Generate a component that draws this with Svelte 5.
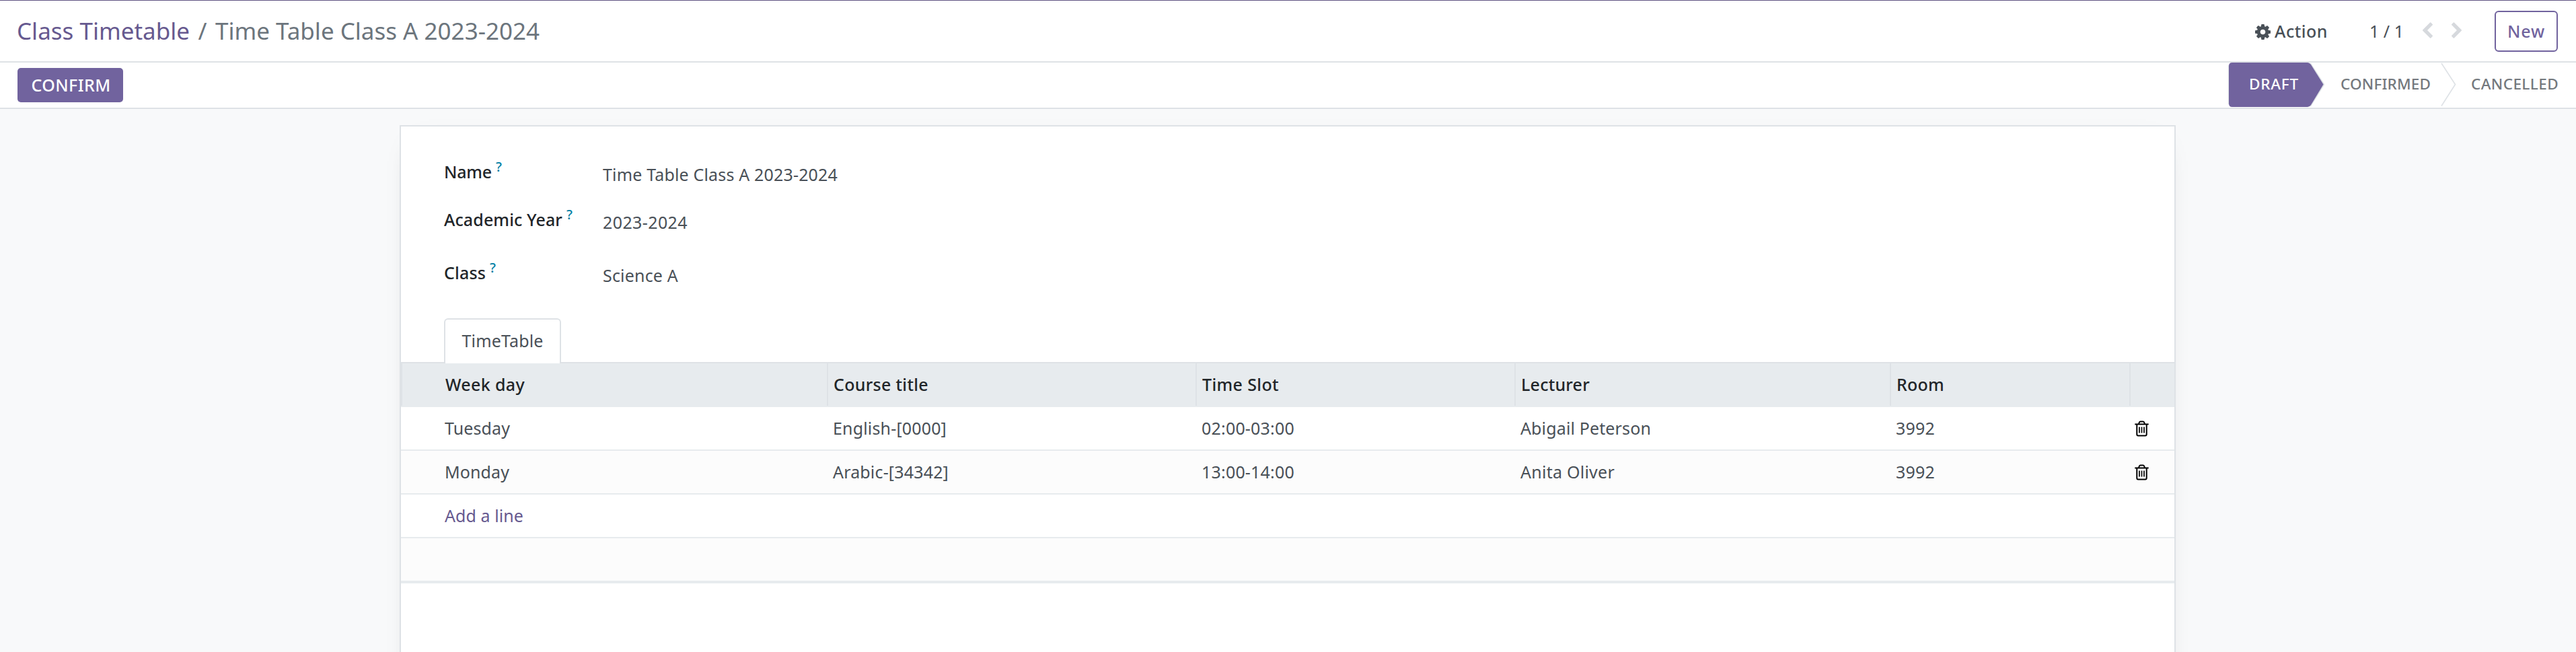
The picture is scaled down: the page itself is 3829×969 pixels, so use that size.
<script>
  const fields = [
    { label: 'Name', lw: 71, value: 'Time Table Class A 2023-2024', vw: 349, h: 71 },
    { label: 'Academic Year', lw: 176, value: '2023-2024', vw: 126, h: 79 },
    { label: 'Class', lw: 62, value: 'Science A', vw: 112, h: 88 }
  ];
  const heads = [['Week day', 118], ['Course title', 141], ['Time Slot', 114], ['Lecturer', 102], ['Room', 71]];
  const rows = [
    [['Tuesday', 97], ['English-[0000]', 169], ['02:00-03:00', 138], ['Abigail Peterson', 194], ['3992', 58]],
    [['Monday', 96], ['Arabic-[34342]', 172], ['13:00-14:00', 138], ['Anita Oliver', 140], ['3992', 58]]
  ];

  // Tracks the letters so the text takes up the given width.
  function fit(node, width) {
    const natural = node.getBoundingClientRect().width;
    node.style.letterSpacing = (width - natural) / node.textContent.length + 'px';
  }
</script>

{#snippet t(text, width)}<span class="t" use:fit={width}>{text}</span>{/snippet}

<div class="page">
  <header class="top">
    <div class="crumbs">
      <a href="#list">{@render t('Class Timetable', 257)}</a>
      <span class="slash">/</span>
      <span>{@render t('Time Table Class A 2023-2024', 482)}</span>
    </div>
    <div class="tools">
      <button class="action">
        <svg width="23" height="23" viewBox="128 128 1536 1536"><path fill="currentColor" d="M1152 896q0-106-75-181t-181-75-181 75-75 181 75 181 181 75 181-75 75-181zm512-109v222q0 12-8 23t-20 13l-185 28q-19 54-39 91 35 50 107 138 10 12 10 25t-9 23q-27 37-99 108t-94 71q-12 0-26-9l-138-108q-44 23-91 38-16 136-29 186-7 28-36 28h-222q-14 0-24.5-8.5t-11.5-21.5l-28-184q-49-16-90-37l-141 107q-10 9-25 9-14 0-25-11-126-114-165-168-7-10-7-23 0-12 8-23 15-21 51-66.5t54-70.5q-27-50-41-99l-183-27q-13-2-21-12.5t-8-23.5v-222q0-12 8-23t19-13l186-28q14-46 39-92-40-57-107-138-10-12-10-24 0-10 9-23 26-36 98.5-107.5t94.5-71.5q13 0 26 10l138 107q44-23 91-38 16-136 29-186 7-28 36-28h222q14 0 24.5 8.5t11.5 21.5l28 184q49 16 90 37l142-107q9-9 24-9 13 0 25 10 129 119 165 170 7 8 7 22 0 12-8 23-15 21-51 66.5t-54 70.5q26 50 41 98l183 28q13 2 21 12.5t8 23.5z"/></svg>
        {@render t('Action', 79)}
      </button>
      <span class="pager">{@render t('1 / 1', 51)}</span>
      <svg class="chev prev" width="15" height="24" viewBox="410 26 1036 1612"><path d="M1427 301l-531 531 531 531q19 19 19 45t-19 45l-166 166q-19 19-45 19t-45-19l-742-742q-19-19-19-45t19-45l742-742q19-19 45-19t45 19l166 166q19 19 19 45t-19 45z"/></svg>
      <svg class="chev next" width="15" height="24" viewBox="346 26 1036 1612"><path d="M1363 877l-742 742q-19 19-45 19t-45-19l-166-166q-19-19-19-45t19-45l531-531-531-531q-19-19-19-45t19-45l166-166q19-19 45-19t45 19l742 742q19 19 19 45t-19 45z"/></svg>
      <button class="new">{@render t('New', 56)}</button>
    </div>
  </header>

  <div class="status">
    <button class="confirm">{@render t('CONFIRM', 118)}</button>
    <div class="steps">
      <div class="step draft">
        <svg width="143" height="66" viewBox="0 0 143 66">
          <path d="M122 1L142.300 32.500L122 65" fill="none" stroke="#dee2e6" stroke-width="2"/>
          <path d="M6 0H118Q121 0 123 3L141.500 32.500L123 63Q121 66 118 66H6Q1 66 1 61V5Q1 0 6 0Z" fill="#71639e"/>
          <path d="M0.500 4V62" stroke="#dee2e6"/>
        </svg>
        <span class="over">{@render t('DRAFT', 74)}</span>
      </div>
      <div class="step confirmed">{@render t('CONFIRMED', 134)}</div>
      <svg class="sep" width="23" height="66" viewBox="0 0 23 66"><path d="M1 1L21.500 32.500L1 64.500" fill="none" stroke="#dee2e6" stroke-width="1.600"/></svg>
      <div class="step cancelled">{@render t('CANCELLED', 130)}</div>
    </div>
  </div>

  <main>
    <section class="sheet">
      <div class="fields">
        {#each fields as f}
          <div class="field" style="height:{f.h}px">
            <div class="label">{@render t(f.label, f.lw)}<sup>?</sup></div>
            <div class="value">{@render t(f.value, f.vw)}</div>
          </div>
        {/each}
      </div>
      <div class="tabs"><div class="tab">{@render t('TimeTable', 121)}</div></div>
      <div class="table">
        <div class="row head">
          {#each heads as [text, w]}<div class="cell">{@render t(text, w)}</div>{/each}
          <div class="cell"></div>
        </div>
        {#each rows as row, i}
          <div class="row" class:alt={i % 2 === 1}>
            {#each row as [text, w]}<div class="cell">{@render t(text, w)}</div>{/each}
            <div class="cell bin">
              <svg width="21" height="24" viewBox="0 0 21 24" fill="none" stroke="#000">
                <path stroke-width="2" d="M0.300 5.500H20.700M6 5L7 2.500Q7.400 1.500 8.500 1.500H12.500Q13.600 1.500 14 2.500L15 5M3.300 5.500V20.500Q3.300 22.500 5.200 22.500H15.800Q17.700 22.500 17.700 20.500V5.500"/>
                <path stroke-width="1.700" d="M7 9.500V18.500M10.500 9.500V18.500M14 9.500V18.500"/>
              </svg>
            </div>
          </div>
        {/each}
        <div class="row"><div class="cell"><a href="#add">{@render t('Add a line', 117)}</a></div></div>
        <div class="row alt last"></div>
      </div>
    </section>
  </main>
</div>

<style>
  :global(body) { margin: 0; overflow: hidden; }
  .page {
    width: 3829px; height: 969px; overflow: hidden; box-sizing: border-box;
    display: flex; flex-direction: column;
    font: 25px/40px "Noto Sans", "Open Sans", sans-serif; color: #495057; background: #f8f9fa;
  }
  .page * { box-sizing: border-box; }
  .t { display: inline-block; white-space: pre; }
  a { color: #66598f; text-decoration: none; }
  button { font: inherit; font-weight: 500; margin: 0; padding: 0; border: 0; background: none; display: flex; align-items: center; }
  svg { display: block; flex: none; }

  .top {
    height: 93px; flex: none; background: #fff; border-top: 1px solid #5f5381; border-bottom: 2px solid #dee2e6;
    display: flex; justify-content: space-between; align-items: center; padding: 0 27px 0 25px;
  }
  .crumbs { display: flex; font-size: 35px; line-height: 48px; color: #6c757d; }
  .slash { width: 38px; text-align: center; }
  .tools { display: flex; align-items: center; color: #495057; }
  .action { color: #495057; gap: 6px; }
  .action svg { margin-top: 2px; }
  .pager { margin-left: 62px; }
  .chev { fill: #d6d9dd; margin-top: -3px; }
  .prev { margin-left: 28px; }
  .next { margin-left: 28px; }
  .new { width: 94px; height: 61px; margin-left: 49px; justify-content: center; border: 2px solid #71639e; border-radius: 6px; color: #71639e; }

  .status {
    height: 69px; flex: none; background: #fff; border-bottom: 2px solid #dee2e6;
    display: flex; justify-content: space-between; align-items: center; padding: 0 26px;
  }
  .confirm { width: 157px; height: 51px; justify-content: center; border-radius: 5px; background: #71639e; color: #fff; font-weight: 550; padding: 0 0 1px 2px; }
  .steps { display: flex; height: 67px; font-size: 22.5px; font-weight: 550; color: #73787d; }
  .step { height: 66px; display: flex; align-items: center; padding-bottom: 3px; }
  .draft { position: relative; width: 143px; color: #fff; padding-left: 31px; }
  .draft svg { position: absolute; left: 0; top: 0; }
  .over { position: relative; }
  .confirmed { width: 173px; padding-left: 24px; }
  .cancelled { width: 152px; padding-left: 22px; }

  main { flex: 1; padding: 24px 595px 0 594px; }
  .sheet {
    width: 2640px; height: 900px; background: #fff; border: 2px solid #dee2e6; padding-top: 47px;
    box-shadow: 0 10px 40px -30px rgba(0, 0, 0, 0.4);
  }
  .fields { padding-left: 63px; }
  .field { display: grid; grid-template-columns: 237px 1fr; align-items: start; }
  .label { color: #212529; font-weight: 550; display: flex; padding-left: 1px; }
  sup { font-size: 20px; font-weight: 500; line-height: 40px; margin: -7px 0 0 6px; color: #0180a5; vertical-align: baseline; }
  .value { margin-top: 4px; }
  .tabs { height: 67px; padding-left: 64px; border-bottom: 2px solid #dee2e6; display: flex; }
  .tab {
    width: 174px; height: 67px; background: #fff; border: 2px solid #dee2e6; border-bottom: 0; border-radius: 6px 6px 0 0;
    display: flex; justify-content: center; align-items: center; padding-bottom: 3px;
  }
  .row {
    height: 65px; border-bottom: 2px solid #e7ebee; background: #fff;
    display: grid; grid-template-columns: 633px 548px 474px 558px 356px 67px;
  }
  .head { background: #e7ebee; color: #212529; font-weight: 550; }
  .alt { background: #fcfcfc; }
  .last { height: 67px; border-bottom-width: 4px; }
  .cell { display: flex; align-items: center; padding: 0 0 2px 9px; }
  .cell:first-child { padding-left: 65px; }
  .head .cell { border-left: 2px solid #dee2e6; padding-left: 8px; }
  .head .cell:first-child { padding-left: 64px; }
  .bin { padding: 0 0 0 8px; }
</style>
